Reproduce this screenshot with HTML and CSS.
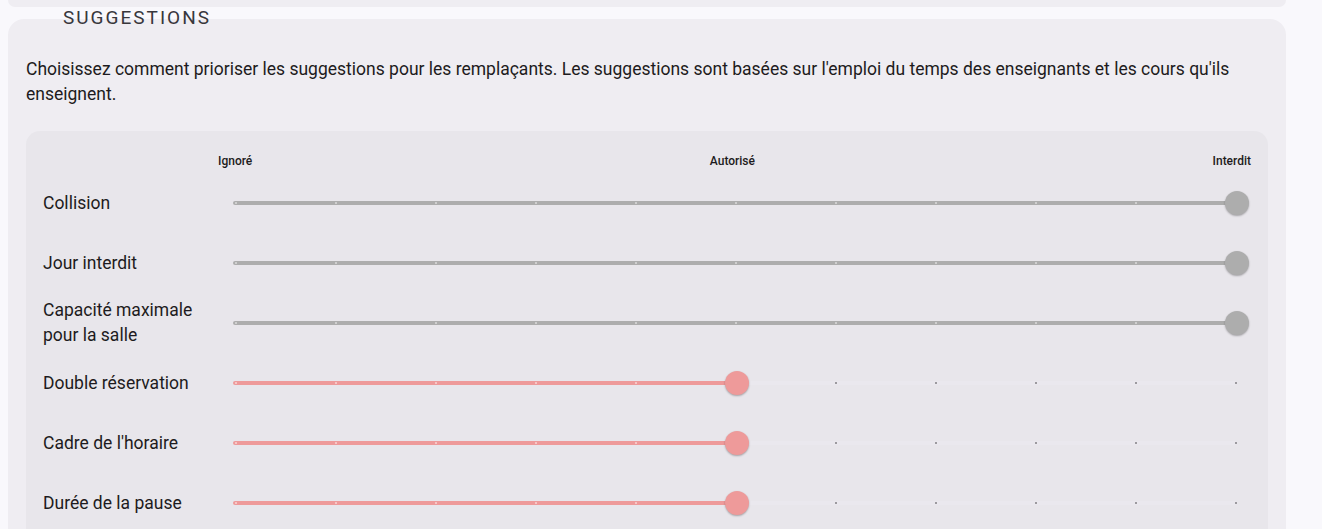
FILE: index.html
```html
<!DOCTYPE html>
<html lang="fr">
<head>
  <meta charset="UTF-8" />
  <meta name="viewport" content="width=device-width, initial-scale=1.0"/>
  <title>Suggestions</title>
  <link rel="stylesheet" href="styles.css">
</head>
<body>

  <div class="top-card"></div>

  <section class="card">
    <h2 class="card-title">Suggestions</h2>
    <p class="intro">Choisissez comment prioriser les suggestions pour les remplaçants. Les suggestions sont basées sur l'emploi du temps des enseignants et les cours qu'ils enseignent.</p>

    <div class="priorities">
      <div class="scale-row">
        <span></span>
        <div class="scale-labels">
          <span>Ignoré</span>
          <span>Autorisé</span>
          <span>Interdit</span>
        </div>
      </div>
      <div id="settings"></div>
    </div>
  </section>

  <script>
    const settings = [
      { label: 'Collision', value: 100 },
      { label: 'Jour interdit', value: 100 },
      { label: 'Capacité maximale pour la salle', value: 100 },
      { label: 'Double réservation', value: 50 },
      { label: "Cadre de l'horaire", value: 50 },
      { label: 'Durée de la pause', value: 50 }
    ];

    const list = document.getElementById('settings');

    settings.forEach(s => {
      const row = document.createElement('div');
      row.className = 'setting ' + (s.value === 100 ? 'forbidden' : 'allowed');

      let ticks = '';
      for (let i = 0; i <= 10; i++) {
        ticks += '<span class="' + (i * 10 <= s.value ? 'on' : 'off') + '"></span>';
      }

      row.innerHTML =
        '<div class="setting-label">' + s.label + '</div>' +
        '<div class="slider">' +
          '<div class="track"></div>' +
          '<div class="fill" style="width: calc(' + s.value + '% + 3px)"></div>' +
          '<div class="ticks">' + ticks + '</div>' +
          '<div class="thumb" style="left: ' + s.value + '%"></div>' +
        '</div>';
      list.appendChild(row);
    });
  </script>

</body>
</html>
```

FILE: styles.css
```css
body {
  margin: 0;
  padding: 0 36px 0 8px;
  background-color: #f9f8fc;
  font-family: Roboto, "Noto Sans", sans-serif;
  color: #1d1b20;
}
.top-card {
  height: 7px;
  background-color: #efedf2;
  border-radius: 0 0 16px 16px;
}
.card {
  display: flow-root;
  margin-top: 12px;
  padding: 0 18px 40px;
  background-color: #efedf2;
  border-radius: 16px;
}
.card-title {
  margin: -12px 0 0 37px;
  font-size: 19px;
  line-height: 22px;
  font-weight: 400;
  letter-spacing: 2px;
  text-transform: uppercase;
  color: #38373c;
}
.intro {
  margin: 28px 0 24px;
  font-size: 17.5px;
  line-height: 25px;
}
.priorities {
  background-color: #e8e6eb;
  border-radius: 14px;
  padding: 23px 17px 20px 17px;
}
.scale-row {
  display: grid;
  grid-template-columns: 175px 1fr;
  margin-bottom: 5px;
  font-size: 12px;
  line-height: 14px;
  font-weight: 500;
}
.scale-labels {
  display: flex;
  justify-content: space-between;
}
.setting {
  display: grid;
  grid-template-columns: 175px 1fr;
  align-items: center;
  height: 60px;
}
.setting-label {
  font-size: 17.5px;
  line-height: 25px;
}
.slider {
  position: relative;
  height: 24px;
  margin: 0 15px 0 18px;
}
.track {
  position: absolute;
  left: -3px;
  right: -1px;
  top: 10px;
  height: 4px;
  border-radius: 2px;
  background-color: #eae8ee;
}
.fill {
  position: absolute;
  left: -3px;
  top: 10px;
  height: 4px;
  border-radius: 2px;
}
.ticks {
  position: absolute;
  left: -1px;
  right: -1px;
  top: 11px;
  height: 2px;
  display: flex;
  justify-content: space-between;
}
.ticks span {
  width: 2px;
  height: 2px;
}
.ticks .off {
  background-color: #9c9a9f;
}
.thumb {
  position: absolute;
  top: 0;
  width: 24px;
  height: 24px;
  margin-left: -11px;
  border-radius: 50%;
  box-shadow: 0 1px 2px rgba(0, 0, 0, 0.3);
}
.forbidden .fill,
.forbidden .thumb {
  background-color: #adadad;
}
.forbidden .ticks .on {
  background-color: #cfcfcf;
}
.allowed .fill,
.allowed .thumb {
  background-color: #ee9a9a;
}
.allowed .ticks .on {
  background-color: #f6c6c6;
}
```
